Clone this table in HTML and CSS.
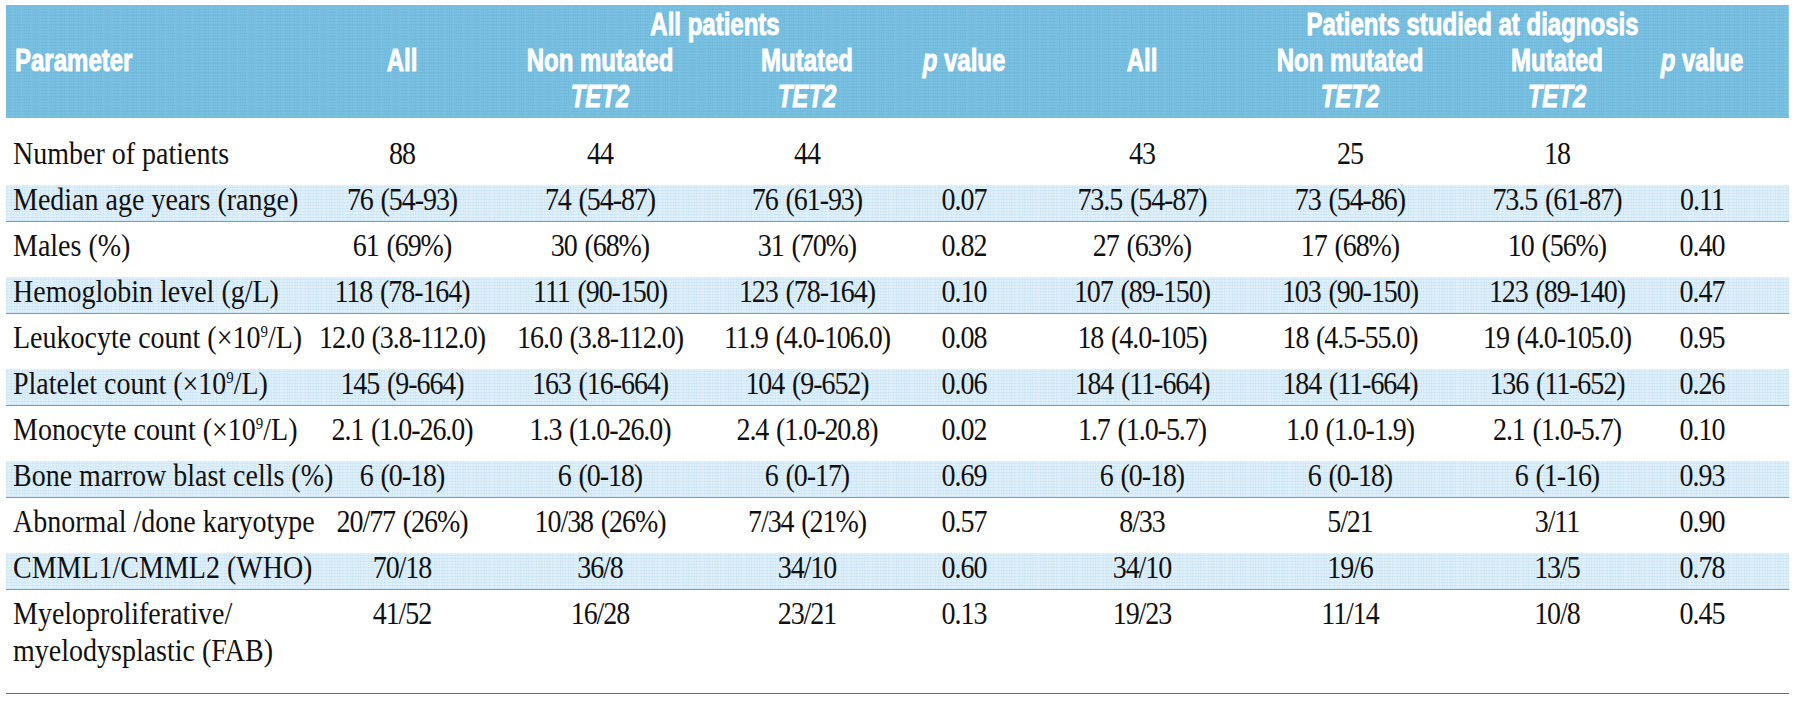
FILE: index.html
```html
<!DOCTYPE html>
<html lang="en">
<head>
<meta charset="utf-8">
<title>TET2 table</title>
<link rel="stylesheet" href="styles.css">
</head>
<body>
<div class="page">
  <div class="hdr">
    <div class="grp">
      <div class="g1">All patients</div>
      <div class="g2">Patients studied at diagnosis</div>
    </div>
    <div class="cols colh">
      <div>Parameter</div>
      <div>All</div>
      <div>Non mutated<br><i>TET2</i></div>
      <div>Mutated<br><i>TET2</i></div>
      <div><i>p</i> value</div>
      <div>All</div>
      <div>Non mutated<br><i>TET2</i></div>
      <div>Mutated<br><i>TET2</i></div>
      <div><i>p</i> value</div>
    </div>
  </div>

  <div class="tb">
    <div class="cols row">
      <div>Number of patients</div><div>88</div><div>44</div><div>44</div><div></div><div>43</div><div>25</div><div>18</div><div></div>
    </div>
    <div class="cols row alt">
      <div>Median age years (range)</div><div>76 (54-93)</div><div>74 (54-87)</div><div>76 (61-93)</div><div>0.07</div><div>73.5 (54-87)</div><div>73 (54-86)</div><div>73.5 (61-87)</div><div>0.11</div>
    </div>
    <div class="cols row">
      <div>Males (%)</div><div>61 (69%)</div><div>30 (68%)</div><div>31 (70%)</div><div>0.82</div><div>27 (63%)</div><div>17 (68%)</div><div>10 (56%)</div><div>0.40</div>
    </div>
    <div class="cols row alt">
      <div>Hemoglobin level (g/L)</div><div>118 (78-164)</div><div>111 (90-150)</div><div>123 (78-164)</div><div>0.10</div><div>107 (89-150)</div><div>103 (90-150)</div><div>123 (89-140)</div><div>0.47</div>
    </div>
    <div class="cols row">
      <div>Leukocyte count (×10<sup>9</sup>/L)</div><div>12.0 (3.8-112.0)</div><div>16.0 (3.8-112.0)</div><div>11.9 (4.0-106.0)</div><div>0.08</div><div>18 (4.0-105)</div><div>18 (4.5-55.0)</div><div>19 (4.0-105.0)</div><div>0.95</div>
    </div>
    <div class="cols row alt">
      <div>Platelet count (×10<sup>9</sup>/L)</div><div>145 (9-664)</div><div>163 (16-664)</div><div>104 (9-652)</div><div>0.06</div><div>184 (11-664)</div><div>184 (11-664)</div><div>136 (11-652)</div><div>0.26</div>
    </div>
    <div class="cols row">
      <div>Monocyte count (×10<sup>9</sup>/L)</div><div>2.1 (1.0-26.0)</div><div>1.3 (1.0-26.0)</div><div>2.4 (1.0-20.8)</div><div>0.02</div><div>1.7 (1.0-5.7)</div><div>1.0 (1.0-1.9)</div><div>2.1 (1.0-5.7)</div><div>0.10</div>
    </div>
    <div class="cols row alt">
      <div>Bone marrow blast cells (%)</div><div>6 (0-18)</div><div>6 (0-18)</div><div>6 (0-17)</div><div>0.69</div><div>6 (0-18)</div><div>6 (0-18)</div><div>6 (1-16)</div><div>0.93</div>
    </div>
    <div class="cols row">
      <div>Abnormal /done karyotype</div><div>20/77 (26%)</div><div>10/38 (26%)</div><div>7/34 (21%)</div><div>0.57</div><div>8/33</div><div>5/21</div><div>3/11</div><div>0.90</div>
    </div>
    <div class="cols row alt">
      <div>CMML1/CMML2 (WHO)</div><div>70/18</div><div>36/8</div><div>34/10</div><div>0.60</div><div>34/10</div><div>19/6</div><div>13/5</div><div>0.78</div>
    </div>
    <div class="cols row two">
      <div>Myeloproliferative/<br>myelodysplastic (FAB)</div><div>41/52</div><div>16/28</div><div>23/21</div><div>0.13</div><div>19/23</div><div>11/14</div><div>10/8</div><div>0.45</div>
    </div>
  </div>
  <div class="rule"></div>
</div>
</body>
</html>
```
FILE: styles.css
```css
html, body {
  margin: 0;
  padding: 0;
  background: #ffffff;
  overflow: hidden;
}

.page {
  padding: 5px 0 0 6px;
  width: 1783px;
}

/* shared column template: widths are real pixels divided by the horizontal scale */
.cols,
.grp {
  display: grid;
  grid-template-columns:
    calc(294px / var(--s)) calc(204px / var(--s)) calc(192px / var(--s))
    calc(214px / var(--s)) calc(108px / var(--s)) calc(248px / var(--s))
    calc(168px / var(--s)) calc(216px / var(--s)) calc(139px / var(--s));
}

.cols > div {
  text-align: center;
  white-space: nowrap;
}
.cols > div:nth-child(1) {
  text-align: left;
}
.cols > div:nth-child(4) {
  padding-left: calc(8px / var(--s));
}
.cols > div:nth-child(8) {
  padding-left: calc(30px / var(--s));
}
.cols > div:nth-child(9) {
  padding-right: calc(35px / var(--s));
}

/* header band */
.hdr {
  --s: 0.75;
  width: calc(1783px / var(--s));
  transform: scaleX(var(--s));
  transform-origin: 0 0;
  box-sizing: border-box;
  height: 113px;
  padding: 1px 0 4px 0;
  background-color: #7ac1e1;
  background-image:
    repeating-linear-gradient(0deg, rgba(60, 140, 190, 0.10) 0 1px, transparent 1px 3px),
    repeating-linear-gradient(90deg, rgba(60, 140, 190, 0.08) 0 1px, transparent 1px 3px);
  color: #ffffff;
  font-family: "Liberation Sans", Arial, sans-serif;
  font-weight: bold;
  font-size: 32px;
  line-height: 36px;
  -webkit-text-stroke: 0.9px #ffffff;
}

.grp {
  height: 36px;
}
.grp > div {
  text-align: center;
  white-space: nowrap;
}
.grp .g1 {
  grid-column: 2 / 6;
  padding-left: calc(112px / var(--s));
}
.grp .g2 {
  grid-column: 6 / 10;
  padding-left: calc(138px / var(--s));
}

.colh > div:nth-child(1) {
  padding-left: calc(9px / var(--s));
}

/* body */
.tb {
  --s: 0.875;
  width: calc(1783px / var(--s));
  transform: scaleX(var(--s));
  transform-origin: 0 0;
  margin-top: 21px;
  display: flex;
  flex-direction: column;
  gap: 9px;
  color: #111111;
  font-family: "Liberation Serif", "Times New Roman", serif;
  font-size: 32px;
  line-height: 28px;
}

.row {
  box-sizing: border-box;
  height: 37px;
}
.row > div:nth-child(1) {
  padding-left: calc(7px / var(--s));
}
.row > div:nth-child(n+2) {
  letter-spacing: -1.2px;
  word-spacing: 2px;
}

.row.alt {
  background-color: #e0f0fa;
  background-image:
    repeating-linear-gradient(0deg, rgba(150, 200, 230, 0.18) 0 1px, transparent 1px 3px),
    repeating-linear-gradient(90deg, rgba(150, 200, 230, 0.14) 0 1px, transparent 1px 3px);
  border-bottom: 1px solid #4eaad6;
}

.row.two {
  height: 74px;
}
.row.two > div:nth-child(1) {
  line-height: 37px;
  margin-top: -4px;
}

sup {
  font-size: 17px;
  line-height: 0;
  vertical-align: 11px;
}

.rule {
  margin-top: 20px;
  height: 0;
  border-top: 1px solid #6a6a6a;
  width: 1783px;
}
```
